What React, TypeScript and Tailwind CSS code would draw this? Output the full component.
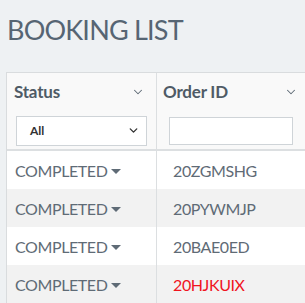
import { ChevronDown } from "lucide-react"

const rows = [
  { status: "COMPLETED", id: "20ZGMSHG", red: false },
  { status: "COMPLETED", id: "20PYWMJP", red: false },
  { status: "COMPLETED", id: "20BAE0ED", red: false },
  { status: "COMPLETED", id: "20HJKUIX", red: true },
]

export default function App() {
  return (
    <div
      className="w-[305px] h-[303px] overflow-hidden bg-[#eef1f3] text-[#566573]"
      style={{ fontFamily: "Lato, 'Liberation Sans', sans-serif" }}
    >
      <h1 className="pl-[7px] pt-[13px] h-[72px] text-[27px] leading-[34px] tracking-[-0.8px] text-[#566573]">
        BOOKING LIST
      </h1>

      <div className="ml-[6px] w-[340px] border-l border-t border-[#d9dcde] bg-white">
        {/* Header */}
        <div className="flex h-[78px] border-b-2 border-[#dcdfe1] bg-[#f9f9f9]">
          <div className="w-[150px] shrink-0 border-r border-[#dcdfe1] pl-[7px] pr-[11px] pt-[6px]">
            <div className="flex items-center justify-between">
              <span className="text-[17px] font-bold tracking-[-0.2px] text-[#4f5b66]">Status</span>
              <ChevronDown className="size-[14px] text-[#5f6b76]" strokeWidth={1.8} />
            </div>
            <div className="mt-[11px] ml-[2px] flex h-[30px] w-[131px] items-center justify-between border border-[#cfd4d8] bg-white pl-[13px] pr-[6px]">
              <span className="text-[12px] font-bold text-[#333]">All</span>
              <ChevronDown className="size-[13px] text-[#333]" strokeWidth={2.5} />
            </div>
          </div>
          <div className="flex-1 pl-[6px] pt-[6px]">
            <div className="flex w-[135px] items-center justify-between">
              <span className="text-[17px] font-bold tracking-[-0.2px] text-[#4f5b66]">Order ID</span>
              <ChevronDown className="size-[14px] text-[#5f6b76]" strokeWidth={1.8} />
            </div>
            <div className="mt-[12px] ml-[6px] h-[28px] w-[124px] border border-[#cfd4d8] bg-white" />
          </div>
        </div>

        {/* Rows */}
        {rows.map((r, i) => (
          <div
            key={r.id}
            className={`flex h-[38px] items-center text-[16px] tracking-[-0.4px] ${i % 2 ? "bg-[#f2f2f2]" : "bg-white"}`}
          >
            <div className="flex h-full w-[150px] shrink-0 items-center border-r border-[#dcdfe1] pl-[8px] pt-[1px] text-[#5f6b76]">
              {r.status}
              <span className="ml-[4px] mt-[1px] h-0 w-0 border-x-[5px] border-t-[5px] border-x-transparent border-t-[#5f6b76]" />
            </div>
            <div className={`pl-[16px] pt-[1px] ${r.red ? "text-[#f0141e]" : "text-[#5f6b76]"}`}>{r.id}</div>
          </div>
        ))}
      </div>
    </div>
  )
}
